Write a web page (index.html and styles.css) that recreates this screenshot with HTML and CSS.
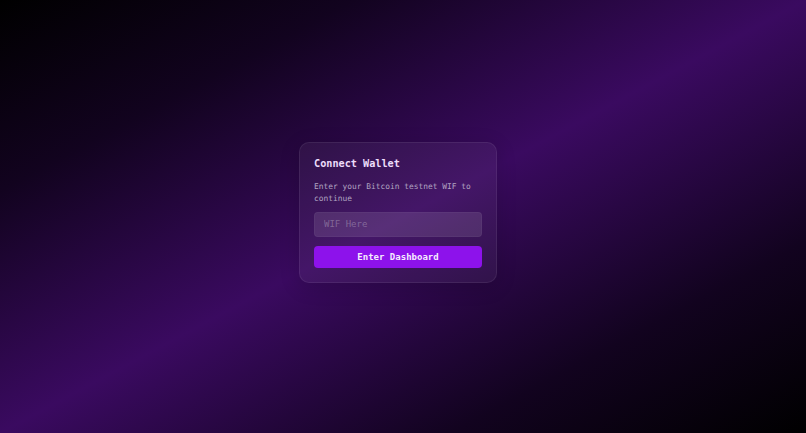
FILE: index.html
```html
<!DOCTYPE html>
<html lang="en">
<head>
  <meta charset="UTF-8">
  <meta name="viewport" content="width=device-width, initial-scale=1.0">
  <title>Connect Wallet</title>
  <link rel="stylesheet" href="styles.css">
</head>
<body>
  <div class="card">
    <h2>Connect Wallet</h2>
    <p>Enter your Bitcoin testnet WIF to continue</p>
    <input type="text" id="wif" placeholder="WIF Here">
    <button>Enter Dashboard</button>
  </div>
</body>
</html>
```

FILE: styles.css
```css
html, body {
  height: 100%;
}
body {
  margin: 0;
  font-family: "DejaVu Sans Mono", monospace;
  background: linear-gradient(to bottom right, #000 0%, #12031f 22%, #3a0a60 50%, #12031f 78%, #000 100%);
  display: flex;
  justify-content: center;
  align-items: center;
}
.card {
  box-sizing: border-box;
  width: 198px;
  padding: 14px;
  margin: 0 10px 8px 0;
  background: rgba(255, 255, 255, 0.05);
  border: 1px solid rgba(255, 255, 255, 0.07);
  border-radius: 10px;
  box-shadow: 0 4px 20px rgba(0, 0, 0, 0.15);
  display: flex;
  flex-direction: column;
}
h2 {
  margin: 1px 0 12px;
  font-size: 10.2px;
  font-weight: bold;
  color: #ecdcfa;
}
p {
  margin: 0 0 8px;
  font-size: 7.9px;
  line-height: 11.3px;
  color: #b2a5c2;
}
input {
  box-sizing: border-box;
  height: 25px;
  padding: 0 9px;
  font-family: inherit;
  font-size: 9px;
  color: #eee;
  background: rgba(255, 255, 255, 0.11);
  border: 1px solid rgba(255, 255, 255, 0.04);
  border-radius: 4px;
  outline: none;
}
input::placeholder {
  color: rgba(255, 255, 255, 0.28);
}
button {
  margin-top: 9px;
  height: 22px;
  font-family: inherit;
  font-size: 9px;
  font-weight: bold;
  color: #f6ecff;
  background: #8d12eb;
  border: none;
  border-radius: 4px;
  cursor: pointer;
}
```
